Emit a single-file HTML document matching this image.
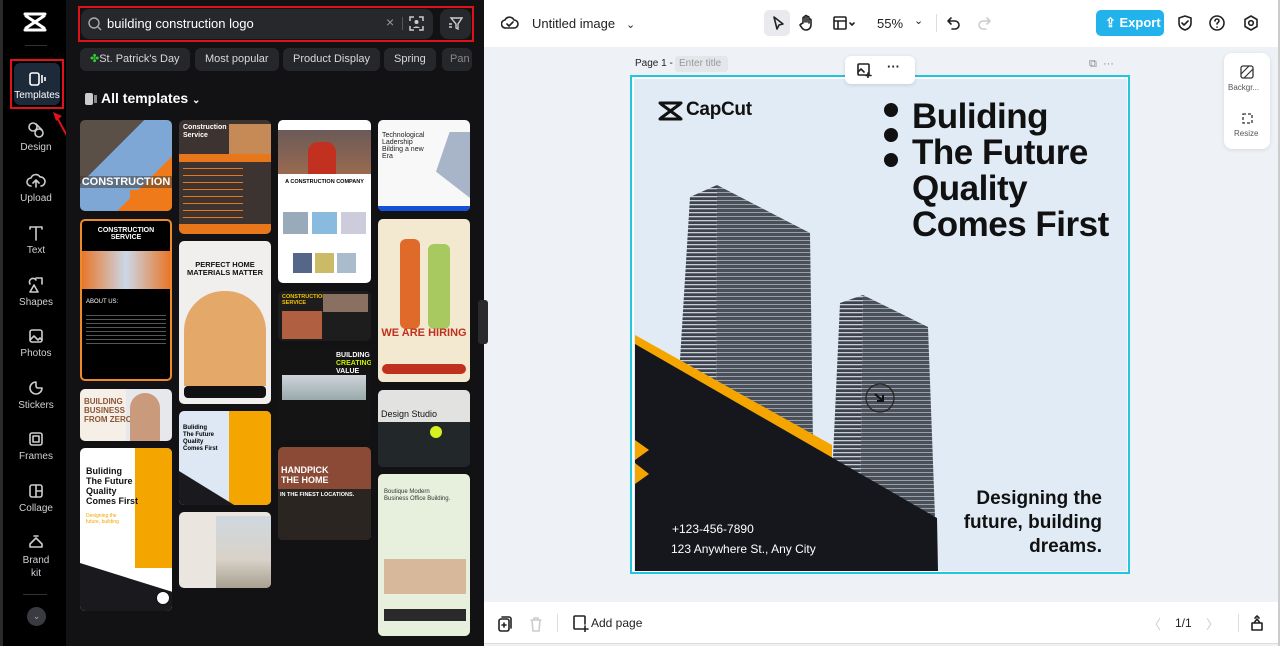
<!DOCTYPE html>
<html><head><meta charset="utf-8"><style>
*{box-sizing:border-box;margin:0;padding:0}
body{width:1280px;height:646px;overflow:hidden;font-family:"Liberation Sans",sans-serif;background:#eef1f5;position:relative}
.abs{position:absolute}
#side{left:0;top:0;width:66px;height:646px;background:#000;border-left:3px solid #2a2a2a}
.nav{position:absolute;left:0;width:66px;text-align:center;color:#cfd1d6;font-size:10px}
.nav svg{display:block;margin:0 auto 3px}
#panel{left:66px;top:0;width:418px;height:646px;background:#121215}
.chip{position:absolute;top:48px;height:23px;border-radius:6px;background:#26272b;color:#d8d9dc;font-size:11px;line-height:23px;padding:0 10px;white-space:nowrap}
.t{position:absolute;border-radius:5px;overflow:hidden}
#top{left:484px;top:0;width:796px;height:47px;background:#fff}
#bot{left:484px;top:602px;width:796px;height:42px;background:#fff;border-bottom:1px solid #ddd}
.ic{stroke:#222;fill:none;stroke-width:1.6;stroke-linecap:round;stroke-linejoin:round}
</style></head><body>

<div id="side" class="abs">
 <svg class="abs" style="left:20px;top:12px" width="24" height="20" viewBox="0 0 24 20"><path d="M2 2h20M2 18h20M3 4l18 12M3 16L21 4" fill="none" stroke="#fff" stroke-width="3" stroke-linecap="round"/></svg>
 <div class="abs" style="left:22px;top:45px;width:22px;height:1px;background:#333"></div>
 <div class="abs" style="left:7px;top:59px;width:54px;height:50px;border:2px solid #e0121b;padding:2px"><div style="width:100%;height:100%;background:#1c2a3a;border-radius:6px;color:#fff;font-size:10px;text-align:center;padding-top:8px"><svg width="18" height="16" viewBox="0 0 18 16" style="display:block;margin:0 auto 3px"><rect x="2" y="2" width="9" height="12" rx="2" fill="none" stroke="#fff" stroke-width="1.6"/><path d="M14 4v8M17 6v4" stroke="#fff" stroke-width="1.6"/></svg>Templates</div></div>
 <svg class="abs" style="left:48px;top:110px" width="30" height="45"><path d="M25 42L4 4" stroke="#e0121b" stroke-width="2"/><path d="M2 2l9 4-6 5z" fill="#e0121b"/></svg>
 <div class="nav" style="top:121px"><svg width="18" height="18" class="ic" style="stroke:#ccc"><circle cx="6" cy="6" r="4"/><circle cx="12" cy="12" r="4"/><path d="M9 3l6 6"/></svg>Design</div>
 <div class="nav" style="top:172px"><svg width="20" height="18" class="ic" style="stroke:#ccc"><path d="M5 14a4 4 0 010-8 5 5 0 019-1 4 4 0 011 9M10 8v7M7 11l3-3 3 3"/></svg>Upload</div>
 <div class="nav" style="top:224px"><svg width="18" height="18" class="ic" style="stroke:#ccc"><path d="M3 3h12M9 3v13M3 3v2M15 3v2"/></svg>Text</div>
 <div class="nav" style="top:276px"><svg width="18" height="18" class="ic" style="stroke:#ccc"><path d="M9 2h6v6M3 16l4-7 4 7z M3 8a3 3 0 016-4"/></svg>Shapes</div>
 <div class="nav" style="top:327px"><svg width="18" height="18" class="ic" style="stroke:#ccc"><rect x="3" y="3" width="12" height="12" rx="2"/><path d="M3 13l4-4 4 4 2-2 2 2"/></svg>Photos</div>
 <div class="nav" style="top:379px"><svg width="18" height="18" class="ic" style="stroke:#ccc"><path d="M9 3a6 6 0 106 6h-4a2 2 0 01-2-2z"/></svg>Stickers</div>
 <div class="nav" style="top:430px"><svg width="18" height="18" class="ic" style="stroke:#ccc"><rect x="3" y="3" width="12" height="12" rx="2"/><rect x="6" y="6" width="6" height="6"/></svg>Frames</div>
 <div class="nav" style="top:482px"><svg width="18" height="18" class="ic" style="stroke:#ccc"><rect x="3" y="3" width="12" height="12" rx="2"/><path d="M9 3v12M9 9h6"/></svg>Collage</div>
 <div class="nav" style="top:533px;line-height:13px"><svg width="18" height="18" class="ic" style="stroke:#ccc"><path d="M3 14h12v-3L9 5 3 11z M7 3l4 0"/></svg>Brand<br>kit</div>
 <div class="abs" style="left:20px;top:594px;width:24px;height:1px;background:#333"></div>
 <div class="abs" style="left:24px;top:607px;width:19px;height:19px;border-radius:50%;background:#3a3b40;color:#aaa;font-size:9px;text-align:center;line-height:19px">⌄</div>
</div>

<div id="panel" class="abs">
 <div class="abs" style="left:12px;top:6px;width:396px;height:36px;border:2px solid #e0121b"></div>
 <div class="abs" style="left:15px;top:9px;width:352px;height:30px;background:#27282c;border-radius:8px"></div>
 <svg class="abs" style="left:22px;top:17px" width="14" height="14"><circle cx="6" cy="6" r="5" fill="none" stroke="#aaa" stroke-width="1.4"/><path d="M10 10l3 3" stroke="#aaa" stroke-width="1.4"/></svg>
 <div class="abs" style="left:41px;top:16px;color:#fff;font-size:13px">building construction logo</div>
 <div class="abs" style="left:320px;top:14px;color:#999;font-size:14px">×</div>
 <div class="abs" style="left:336px;top:17px;width:1px;height:13px;background:#555"></div>
 <svg class="abs" style="left:343px;top:16px" width="15" height="15"><path d="M1 5V1h4M10 1h4v4M14 10v4h-4M5 14H1v-4" fill="none" stroke="#ccc" stroke-width="1.5"/><circle cx="7.5" cy="6" r="2" fill="#ccc"/><path d="M4 12a4 3 0 017 0" fill="#ccc"/></svg>
 <div class="abs" style="left:374px;top:9px;width:31px;height:30px;background:#27282c;border-radius:8px"></div>
 <svg class="abs" style="left:382px;top:16px" width="15" height="15"><path d="M3 2h11l-4 6v5l-2-1V8z" fill="none" stroke="#ccc" stroke-width="1.4"/><path d="M1 8h3M1 11h3" stroke="#ccc" stroke-width="1.4"/></svg>
 <div class="chip" style="left:14px"><span style="color:#3c3">✤</span>St. Patrick's Day</div>
 <div class="chip" style="left:129px">Most popular</div>
 <div class="chip" style="left:217px">Product Display</div>
 <div class="chip" style="left:318px">Spring</div>
 <div class="chip" style="left:376px;width:30px;overflow:hidden;padding:0 8px;color:#888">Pan</div>
 <svg class="abs" style="left:18px;top:92px" width="14" height="14"><rect x="1" y="1" width="8" height="12" rx="2" fill="#ccc"/><rect x="10" y="3" width="3" height="8" fill="#888"/></svg>
 <div class="abs" style="left:35px;top:90px;color:#fff;font-size:14px;font-weight:bold">All templates <span style="font-size:10px">⌄</span></div>

 <div class="t" style="left:14px;top:120px;width:92px;height:91px;background:linear-gradient(135deg,#5a5048 0 35%,#7fa7d6 35% 70%,#ef7a1a 70%)"><div style="position:absolute;left:0;top:56px;width:92px;background:rgba(60,55,50,.5);color:#fff;font-weight:bold;font-size:11px;text-align:center">CONSTRUCTION</div><div style="position:absolute;left:50px;top:70px;width:42px;height:21px;background:#ef7a1a"></div></div>
 <div class="t" style="left:14px;top:219px;width:92px;height:162px;background:#000;border:2px solid #ef8a2a"><div style="color:#fff;font-size:7px;font-weight:bold;text-align:center;margin-top:6px">CONSTRUCTION SERVICE</div><div style="height:38px;margin-top:10px;background:linear-gradient(90deg,#e8762a,#cbd8e8,#e8762a)"></div><div style="color:#fff;font-size:6px;margin:10px 4px">ABOUT US:</div><div style="margin:0 4px;height:30px;background:repeating-linear-gradient(#555 0 1px,#000 1px 4px)"></div></div>
 <div class="t" style="left:14px;top:389px;width:92px;height:52px;background:linear-gradient(90deg,#f5efe8 50%,#e6e8ec 50%)"><div style="position:absolute;left:4px;top:8px;color:#8a5534;font-size:8px;font-weight:bold;line-height:9px">BUILDING<br>BUSINESS<br>FROM ZERO</div><div style="position:absolute;left:50px;top:4px;width:30px;height:48px;border-radius:15px 15px 0 0;background:#c99a7c"></div></div>
 <div class="t" style="left:14px;top:448px;width:92px;height:163px;background:#fff"><div style="position:absolute;left:55px;top:0;width:37px;height:120px;background:#f5a500"></div><div style="position:absolute;left:6px;top:18px;font-size:9px;font-weight:bold;line-height:10px;color:#111">Buliding<br>The Future<br>Quality<br>Comes First</div><div style="position:absolute;left:6px;top:65px;font-size:5px;color:#f5a500">Designing the<br>future, building</div><div style="position:absolute;left:0;top:115px;width:92px;height:48px;background:#1a1a1e;clip-path:polygon(0 0,100% 60%,100% 100%,0 100%)"></div><div style="position:absolute;left:76px;top:143px;width:14px;height:14px;border-radius:50%;background:#fff;border:1px solid #111"></div></div>
 <div class="t" style="left:113px;top:120px;width:92px;height:114px;background:#3d3330"><div style="position:absolute;left:4px;top:4px;color:#fff;font-size:7px;font-weight:bold;line-height:8px">Construction<br>Service</div><div style="position:absolute;left:50px;top:4px;width:42px;height:30px;background:#c58a55"></div><div style="position:absolute;left:0;top:34px;width:92px;height:8px;background:#e8761a"></div><div style="position:absolute;left:4px;top:48px;width:60px;height:50px;background:repeating-linear-gradient(#e8761a 0 1px,#3d3330 1px 7px)"></div><div style="position:absolute;left:0;top:104px;width:92px;height:10px;background:#e8761a"></div></div>
 <div class="t" style="left:113px;top:241px;width:92px;height:163px;background:#f0efee"><div style="text-align:center;font-size:7.5px;font-weight:bold;margin-top:20px;line-height:8px;color:#111">PERFECT HOME<br>MATERIALS MATTER</div><div style="position:absolute;left:5px;top:50px;width:82px;height:95px;border-radius:40px 40px 0 0;background:#e4a868"></div><div style="position:absolute;left:5px;top:145px;width:82px;height:12px;border-radius:4px;background:#111"></div></div>
 <div class="t" style="left:113px;top:411px;width:92px;height:94px;background:#dde8f4"><div style="position:absolute;left:50px;top:0;width:42px;height:94px;background:#f5a500"></div><div style="position:absolute;left:4px;top:14px;font-size:6px;font-weight:bold;line-height:7px">Buliding<br>The Future<br>Quality<br>Comes First</div><div style="position:absolute;left:0;top:60px;width:92px;height:34px;background:#1a1a1e;clip-path:polygon(0 0,60% 100%,0 100%)"></div></div>
 <div class="t" style="left:113px;top:512px;width:92px;height:76px;background:#ebe5df"><div style="position:absolute;left:37px;top:4px;width:55px;height:72px;background:linear-gradient(#cfd8e0,#d8d2c8 60%,#a8a090)"></div></div>
 <div class="t" style="left:212px;top:120px;width:93px;height:163px;background:#fff"><div style="position:absolute;left:0;top:10px;width:93px;height:44px;background:linear-gradient(#6a5a58,#9a6a50);"></div><div style="position:absolute;left:30px;top:22px;width:28px;height:32px;background:#c23020;border-radius:10px 10px 0 0"></div><div style="position:absolute;top:59px;width:93px;text-align:center;font-size:5.5px;font-weight:bold">A CONSTRUCTION COMPANY</div><div style="position:absolute;left:5px;top:92px;width:83px;height:22px;background:linear-gradient(90deg,#9ab 30%,#fff 30% 35%,#8bd 35% 65%,#fff 65% 70%,#ccd 70%)"></div><div style="position:absolute;left:15px;top:133px;width:63px;height:20px;background:linear-gradient(90deg,#568 30%,#fff 30% 35%,#cb6 35% 65%,#fff 65% 70%,#abc 70%)"></div></div>
 <div class="t" style="left:212px;top:291px;width:93px;height:50px;background:#1d1d1d"><div style="position:absolute;left:4px;top:3px;color:#f5c400;font-size:5.5px;font-weight:bold">CONSTRUCTION<br>SERVICE</div><div style="position:absolute;left:45px;top:3px;width:45px;height:18px;background:#8a7060"></div><div style="position:absolute;left:4px;top:20px;width:40px;height:28px;background:#b06040"></div></div>
 <div class="t" style="left:212px;top:347px;width:93px;height:93px;background:#141414"><div style="position:absolute;left:58px;top:5px;color:#fff;font-size:7px;font-weight:bold;line-height:8px">BUILDING<br><span style="color:#c6f000">CREATING</span><br>VALUE</div><div style="position:absolute;left:4px;top:28px;width:84px;height:25px;background:linear-gradient(#cfd4da,#9aa)"></div></div>
 <div class="t" style="left:212px;top:447px;width:93px;height:93px;background:#8a4a35"><div style="position:absolute;left:3px;top:18px;color:#fff;font-size:9px;font-weight:bold;line-height:10px">HANDPICK<br>THE HOME</div><div style="position:absolute;left:0;top:42px;width:93px;height:51px;background:#2a2520"></div><div style="position:absolute;left:2px;top:45px;color:#fff;font-size:5.5px;font-weight:bold">IN THE FINEST LOCATIONS.</div></div>
 <div class="t" style="left:312px;top:120px;width:92px;height:91px;background:#f8f8f8"><div style="position:absolute;left:4px;top:12px;font-size:7px;line-height:7px;color:#222">Technological<br>Ladership<br>Bilding a new<br>Era</div><div style="position:absolute;left:58px;top:12px;width:34px;height:66px;background:#a8b4c8;clip-path:polygon(40% 0,100% 0,100% 100%,0 60%)"></div><div style="position:absolute;left:0;top:86px;width:92px;height:5px;background:#1450d8"></div></div>
 <div class="t" style="left:312px;top:219px;width:92px;height:163px;background:#f3e8d0"><div style="position:absolute;left:22px;top:20px;width:20px;height:90px;background:#e06a2a;border-radius:6px"></div><div style="position:absolute;left:50px;top:25px;width:22px;height:85px;background:#a8c860;border-radius:6px"></div><div style="position:absolute;left:0;top:108px;width:92px;text-align:center;color:#c0301e;font-size:11px;font-weight:bold">WE ARE HIRING</div><div style="position:absolute;left:4px;top:145px;width:84px;height:10px;border-radius:5px;background:#c0301e"></div></div>
 <div class="t" style="left:312px;top:390px;width:92px;height:77px;background:#22282a"><div style="position:absolute;left:0;top:0;width:92px;height:32px;background:#e2e2e0"></div><div style="position:absolute;left:3px;top:19px;font-size:9px;color:#111">Design Studio</div><div style="position:absolute;left:52px;top:36px;width:12px;height:12px;border-radius:50%;background:#d8f020"></div></div>
 <div class="t" style="left:312px;top:474px;width:92px;height:162px;background:#e6f0dc"><div style="position:absolute;left:6px;top:15px;font-size:6px;line-height:7px;color:#333">Boutique Modern<br>Business Office Building.</div><div style="position:absolute;left:6px;top:85px;width:82px;height:35px;background:#d8b89a"></div><div style="position:absolute;left:6px;top:135px;width:82px;height:12px;background:#2a2a2a"></div></div>
</div>
<div class="abs" style="left:478px;top:300px;width:10px;height:44px;background:#2a2a2e;border-radius:3px"></div>

<div id="top" class="abs">
 <svg class="abs" style="left:17px;top:15px" width="18" height="16"><path class="ic" d="M5 13a4 4 0 01-1-8 5 5 0 019 0 4 4 0 010 8zM6 9l2 2 4-4"/></svg>
 <div class="abs" style="left:48px;top:16px;font-size:13px;color:#222">Untitled image &nbsp;&nbsp;<span style="font-size:11px">⌄</span></div>
 <div class="abs" style="left:280px;top:10px;width:26px;height:26px;background:#e8eaee;border-radius:5px"></div>
 <svg class="abs" style="left:286px;top:15px" width="16" height="16"><path class="ic" d="M4 2l9 7-4 1-2 4z"/></svg>
 <svg class="abs" style="left:314px;top:14px" width="16" height="18"><path class="ic" d="M5 9V4a1 1 0 012 0v4V2.5a1 1 0 012 0V8V3.5a1 1 0 012 0V9V6a1 1 0 012 0v5a5 5 0 01-5 5c-3 0-4-2-6-5l1-1z"/></svg>
 <svg class="abs" style="left:348px;top:15px" width="26" height="16"><rect class="ic" x="2" y="2" width="12" height="12" rx="1"/><path class="ic" d="M2 6h12M6 6v8M18 8l2 2 2-2"/></svg>
 <div class="abs" style="left:393px;top:16px;font-size:13px;color:#222">55%</div>
 <div class="abs" style="left:430px;top:14px;font-size:11px;color:#222">⌄</div>
 <div class="abs" style="left:452px;top:14px;width:1px;height:18px;background:#ddd"></div>
 <svg class="abs" style="left:462px;top:15px" width="16" height="16"><path class="ic" d="M5 3L2 6l3 3M2 6h7a4 4 0 010 8H6"/></svg>
 <svg class="abs" style="left:492px;top:15px" width="16" height="16"><path class="ic" style="stroke:#ccc" d="M11 3l3 3-3 3M14 6H7a4 4 0 000 8h3"/></svg>
 <div class="abs" style="left:612px;top:10px;width:68px;height:26px;background:#22b2ec;border-radius:5px;color:#fff;font-size:13px;font-weight:bold;line-height:26px;padding-left:9px">⇪ Export</div>
 <svg class="abs" style="left:692px;top:14px" width="18" height="18"><path class="ic" d="M9 2l6 2v5c0 4-3 6-6 7-3-1-6-3-6-7V4zM6 9l2 2 4-4"/></svg>
 <svg class="abs" style="left:724px;top:14px" width="18" height="18"><circle class="ic" cx="9" cy="9" r="7"/><path class="ic" d="M7 7a2 2 0 114 0c0 1.5-2 1.5-2 3M9 13v.1"/></svg>
 <svg class="abs" style="left:758px;top:14px" width="18" height="18"><path class="ic" d="M9 2l6 3.5v7L9 16l-6-3.5v-7z"/><circle class="ic" cx="9" cy="9" r="2.3"/></svg>
</div>

<div class="abs" style="left:635px;top:58px;font-size:10px;color:#222">Page 1 -</div>
<div class="abs" style="left:675px;top:56px;width:53px;height:16px;background:#e3e6ea;border-radius:3px;font-size:10px;color:#999;line-height:16px;padding-left:4px">Enter title</div>
<div class="abs" style="left:1089px;top:58px;font-size:11px;color:#888">⧉ &nbsp;···</div>
<div class="abs" style="left:1224px;top:53px;width:46px;height:96px;background:#fff;border-radius:8px;box-shadow:0 1px 4px rgba(0,0,0,.1)"></div>
<svg class="abs" style="left:1240px;top:65px" width="14" height="14"><rect x="1" y="1" width="12" height="12" rx="2" fill="none" stroke="#333" stroke-width="1.3"/><path d="M1 9l8-8M4 13l9-9" stroke="#333" stroke-width="1.2"/></svg>
<div class="abs" style="left:1228px;top:83px;font-size:8px;color:#555">Backgr...</div>
<svg class="abs" style="left:1240px;top:111px" width="14" height="14"><rect x="3" y="3" width="9" height="9" fill="none" stroke="#333" stroke-width="1.3" stroke-dasharray="3 2"/></svg>
<div class="abs" style="left:1234px;top:129px;font-size:8px;color:#555">Resize</div>

<div class="abs" style="left:630px;top:75px;width:500px;height:499px;border:2px solid #23c6df;background:#fff"></div>
<svg class="abs" style="left:634px;top:79px" width="493" height="492" viewBox="634 79 493 492">
 <defs><pattern id="st" width="6" height="4" patternUnits="userSpaceOnUse"><rect width="6" height="4" fill="#3d434e"/><rect width="6" height="1.3" fill="#c9ced6"/></pattern>
 <pattern id="st2" width="6" height="4" patternUnits="userSpaceOnUse"><rect width="6" height="4" fill="#4a505a"/><rect width="6" height="1" fill="#9aa0a8"/></pattern></defs>
 <rect x="634" y="79" width="493" height="492" fill="#e0ebf6"/>
 <polygon points="690,197 717,185 716,445 680,360" fill="url(#st)"/>
 <polygon points="717,185 810,233 813,443 716,445" fill="url(#st2)"/>
 <polygon points="840,303 863,295 860,517 833,457" fill="url(#st)"/>
 <polygon points="863,295 928,327 935,517 860,517" fill="url(#st2)"/>
 <polygon points="635,335 832,445 832,462 635,352" fill="#f5a500"/>
 <polygon points="635,344 937,518 938,571 635,571" fill="#16171c"/>
 <polygon points="635,440 649,450 635,460" fill="#f5a500"/><polygon points="635,463 649,474 635,484" fill="#f5a500"/>
 <circle cx="880" cy="398" r="14" fill="none" stroke="#222" stroke-width="1.2"/><path d="M875 394l8 7M883 395v6h-6" stroke="#111" stroke-width="2" fill="none"/>
 <path d="M660 103h21M660 119h21M661 104l19 14M661 118l19-14" fill="none" stroke="#111" stroke-width="3" stroke-linecap="round"/>
 <circle cx="891" cy="110" r="7" fill="#111"/><circle cx="891" cy="135" r="7" fill="#111"/><circle cx="891" cy="160" r="7" fill="#111"/>
</svg>
<div class="abs" style="left:686px;top:99px;font-size:19px;font-weight:bold;color:#111;letter-spacing:-.3px">CapCut</div>
<div class="abs" style="left:912px;top:99px;font-size:35px;font-weight:bold;line-height:36px;color:#111;letter-spacing:-.5px">Buliding<br>The Future<br>Quality<br>Comes First</div>
<div class="abs" style="left:930px;top:487px;width:172px;text-align:right;font-size:19px;font-weight:bold;line-height:24px;color:#111">Designing the future, building dreams.</div>
<div class="abs" style="left:672px;top:522px;font-size:12px;color:#fff">+123-456-7890</div>
<div class="abs" style="left:671px;top:542px;font-size:12px;color:#fff">123 Anywhere St., Any City</div>
<div class="abs" style="left:845px;top:56px;width:70px;height:28px;background:#fff;border-radius:6px;box-shadow:0 1px 4px rgba(0,0,0,.12)"></div>
<svg class="abs" style="left:856px;top:62px" width="16" height="16"><rect class="ic" x="2" y="2" width="11" height="11" rx="1"/><path class="ic" d="M2 10l3-3 3 3M12 11v5M10 13.5h5"/></svg>
<div class="abs" style="left:887px;top:59px;font-size:13px;font-weight:bold;color:#222">···</div>

<div id="bot" class="abs">
 <svg class="abs" style="left:12px;top:13px" width="16" height="18"><rect class="ic" x="3" y="4" width="10" height="12" rx="2"/><path class="ic" d="M6 2h7a2 2 0 012 2v9M8 8v4M6 10h4"/></svg>
 <svg class="abs" style="left:44px;top:13px" width="16" height="18"><path class="ic" style="stroke:#ccc" d="M3 5h10M6 5V3h4v2M4 5l1 11h6l1-11"/></svg>
 <div class="abs" style="left:73px;top:12px;width:1px;height:18px;background:#ddd"></div>
 <svg class="abs" style="left:87px;top:12px" width="18" height="18"><path class="ic" d="M10 15H4a1 1 0 01-1-1V3a1 1 0 011-1h9a1 1 0 011 1v7M14 12v6M11 15h6"/></svg>
 <div class="abs" style="left:107px;top:14px;font-size:12px;color:#222">Add page</div>
 <div class="abs" style="left:664px;top:12px;font-size:13px;color:#ccc">〈</div>
 <div class="abs" style="left:691px;top:14px;font-size:12px;color:#222">1/1</div>
 <div class="abs" style="left:722px;top:12px;font-size:13px;color:#ccc">〉</div>
 <div class="abs" style="left:754px;top:12px;width:1px;height:18px;background:#ddd"></div>
 <svg class="abs" style="left:765px;top:12px" width="16" height="18"><path class="ic" d="M3 9h10v7H3zM5 9l3-4 3 4M6 4l2-2 2 2"/></svg>
</div>
<div class="abs" style="left:1278px;top:0;width:2px;height:646px;background:#ccc"></div>
</body></html>
